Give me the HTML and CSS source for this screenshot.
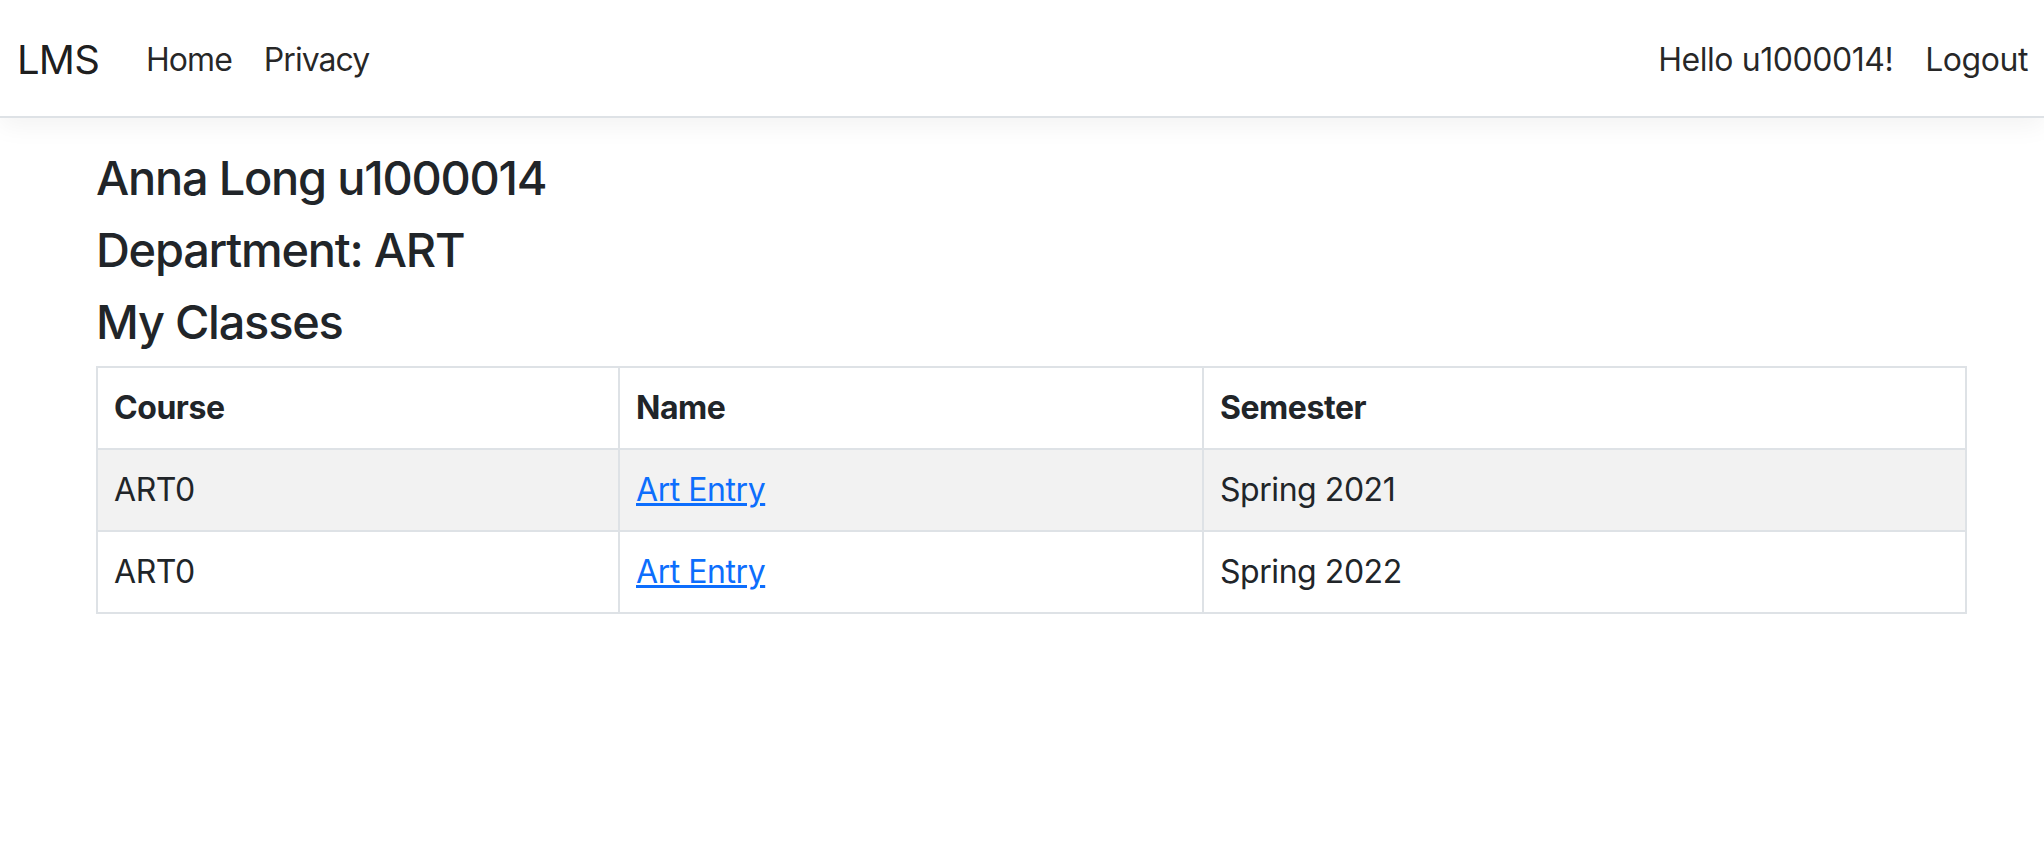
FILE: index.html
```html
<!DOCTYPE html>
<html lang="en">
<head>
<meta charset="utf-8">
<title>LMS</title>
<link rel="stylesheet" href="styles.css">
</head>
<body>
<header class="navbar">
  <div class="nav-left">
    <a class="brand" href="#">LMS</a>
    <a class="nav-link tight" href="#">Home</a>
    <a class="nav-link tight" href="#">Privacy</a>
  </div>
  <div class="nav-right">
    <span class="nav-link">Hello u1000014!</span>
    <a class="nav-link" href="#">Logout</a>
  </div>
</header>
<main class="container">
  <h4 class="title">Anna Long u1000014</h4>
  <h4 class="title">Department: ART</h4>
  <h4 class="title">My Classes</h4>
  <table class="classes">
    <thead>
      <tr><th class="col-course">Course</th><th class="col-name">Name</th><th>Semester</th></tr>
    </thead>
    <tbody>
      <tr class="striped"><td>ART0</td><td><a href="#">Art Entry</a></td><td>Spring 2021</td></tr>
      <tr><td>ART0</td><td><a href="#">Art Entry</a></td><td>Spring 2022</td></tr>
    </tbody>
  </table>
</main>
</body>
</html>
```
FILE: styles.css
```css
* { box-sizing: border-box; }
html, body { margin: 0; padding: 0; }
body {
  font-family: Inter, Roboto, "Liberation Sans", sans-serif;
  font-size: 32px;
  line-height: 48px;
  letter-spacing: -0.014em;
  color: #212529;
  background: #fff;
}
a { text-decoration: none; color: inherit; }

.navbar {
  height: 118px;
  display: flex;
  align-items: center;
  justify-content: space-between;
  padding: 4px 0 0 17px;
  border-bottom: 2px solid #dee2e6;
  box-shadow: 0 8px 24px rgba(0,0,0,.05);
  background: #fff;
}
.nav-left, .nav-right { display: flex; align-items: center; }
.brand {
  font-size: 40px;
  line-height: 60px;
  letter-spacing: -0.02em;
  margin-right: 31px;
  color: rgba(0,0,0,.9);
}
.nav-link {
  padding: 16px;
  color: rgba(0,0,0,.85);
}
.nav-link.tight { letter-spacing: -0.03em; }

.container {
  padding: 32px 77px 0 96px;
}
.title {
  margin: 0 0 16px 0;
  font-size: 46.9px;
  line-height: 56px;
  font-weight: 500;
  letter-spacing: -0.026em;
}
.classes {
  width: 100%;
  border-collapse: collapse;
  margin-top: 5px;
}
.classes th, .classes td {
  border: 2px solid #dee2e6;
  padding: 16px;
  text-align: left;
  vertical-align: top;
  height: 82px;
}
.classes th { font-weight: 700; }
.col-course { width: 522px; }
.col-name { width: 584px; }
.classes tr.striped td { background: #f2f2f2; }
.classes td a { color: #0d6efd; text-decoration: underline; }
```
